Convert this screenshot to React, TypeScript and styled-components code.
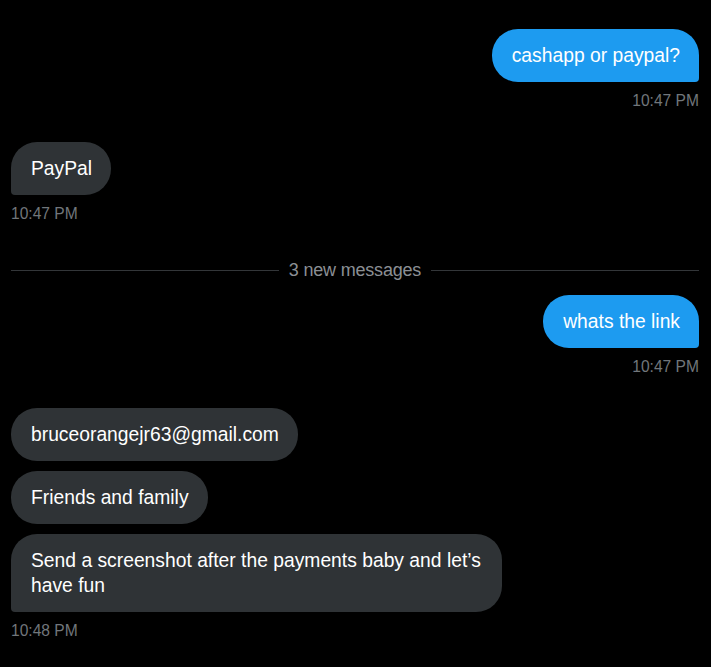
import React from "react";
import styled, { createGlobalStyle } from "styled-components";

type Side = "sent" | "received";

interface Group {
  side: Side;
  texts: string[];
  time: string;
}

const before: Group[] = [
  { side: "sent", texts: ["cashapp or paypal?"], time: "10:47 PM" },
  { side: "received", texts: ["PayPal"], time: "10:47 PM" },
];

const after: Group[] = [
  { side: "sent", texts: ["whats the link"], time: "10:47 PM" },
  {
    side: "received",
    texts: [
      "bruceorangejr63@gmail.com",
      "Friends and family",
      "Send a screenshot after the payments baby and let\u2019s have fun",
    ],
    time: "10:48 PM",
  },
];

const GlobalStyle = createGlobalStyle`
  html, body {
    margin: 0;
    background: #000;
  }
  body {
    font-family: "Liberation Sans", Arial, sans-serif;
    color: #e7e9ea;
  }
`;

const MessageGroup = ({ group }: { group: Group }) => (
  <GroupWrap side={group.side}>
    {group.texts.map((text, i) => (
      <Bubble
        key={text}
        side={group.side}
        last={i === group.texts.length - 1}
      >
        {text}
      </Bubble>
    ))}
    <Time>{group.time}</Time>
  </GroupWrap>
);

const App = () => {
  return (
    <>
      <GlobalStyle />
      <Conversation>
        {before.map((g, i) => (
          <MessageGroup key={i} group={g} />
        ))}
        <Divider>
          <span>3 new messages</span>
        </Divider>
        {after.map((g, i) => (
          <MessageGroup key={i} group={g} />
        ))}
      </Conversation>
    </>
  );
};

export default App;

const Conversation = styled.main`
  display: flex;
  flex-direction: column;
  gap: 31px;
  padding: 29px 12px 27px 11px;
  min-height: 667px;
  box-sizing: border-box;
  background: #000;
`;

const GroupWrap = styled.div<{ side: Side }>`
  display: flex;
  flex-direction: column;
  align-items: ${(p) => (p.side === "sent" ? "flex-end" : "flex-start")};
  gap: 10px;
`;

const Bubble = styled.div<{ side: Side; last: boolean }>`
  max-width: 452px;
  padding: 14px 19px 14px 20px;
  font-size: 19.3px;
  line-height: 25px;
  color: #fff;
  background: ${(p) => (p.side === "sent" ? "#1d9bf0" : "#2f3336")};
  border-radius: 26px;
  ${(p) =>
    p.last &&
    (p.side === "sent"
      ? "border-bottom-right-radius: 4px;"
      : "border-bottom-left-radius: 4px;")}
`;

const Time = styled.div`
  margin-top: -1px;
  font-size: 15.6px;
  line-height: 20px;
  color: #71767b;
`;

const Divider = styled.div`
  display: flex;
  align-items: center;
  gap: 10px;
  margin: 5px 0 -16px;
  height: 20px;

  &::before,
  &::after {
    content: "";
    flex: 1;
    height: 1px;
    background: #333639;
  }

  span {
    font-size: 18px;
    font-weight: 500;
    color: #8b8f94;
    letter-spacing: -0.2px;
  }
`;
